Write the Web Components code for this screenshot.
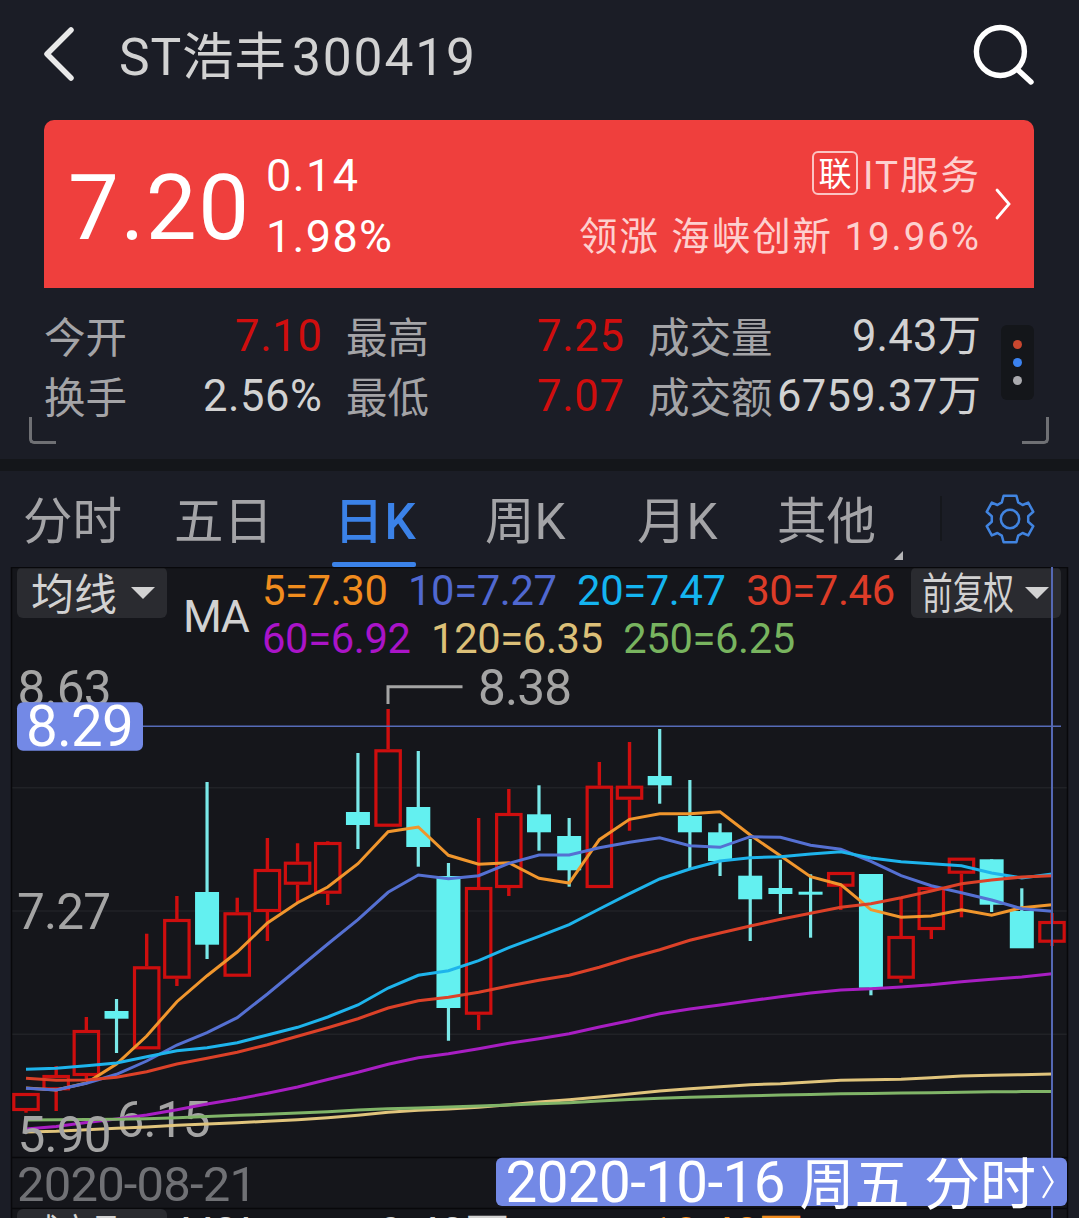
<!DOCTYPE html>
<html lang="zh-CN">
<head>
<meta charset="utf-8">
<title>ST浩丰 300419</title>
<style>
  body {
    margin: 0;
    background: #1b1d26;
    color: #d2d2d2;
    font-family: Roboto, "Noto Sans CJK SC", sans-serif;
    overflow: hidden;
  }
</style>
</head>
<body>
<stock-page></stock-page>

<script>
const define = (name, html, setup) => {
  const template = document.createElement('template');
  template.innerHTML = html;
  customElements.define(name, class extends HTMLElement {
    constructor() {
      super();
      this.attachShadow({ mode: 'open' });
      this.shadowRoot.appendChild(template.content.cloneNode(true));
    }
    connectedCallback() {
      if (setup) setup(this, this.shadowRoot);
    }
  });
};

// Text tracked out (or in) to an exact width
define('fit-label', `
<style>
  :host { display: block; flex: none; }
  span { display: inline-block; white-space: nowrap; }
</style>
<span><slot></slot></span>
`, (host, root) => {
  const count = host.textContent.length;
  if (count < 2) return;
  const span = root.querySelector('span');
  span.style.letterSpacing = '0px';
  span.style.marginRight = '0px';
  const natural = span.getBoundingClientRect().width;
  const space = (Number(host.getAttribute('width')) - natural) / (count - 1);
  span.style.letterSpacing = `${space}px`;
  span.style.marginRight = `${-space}px`;
});

define('title-bar', `
<style>
  :host {
    display: flex;
    align-items: center;
    box-sizing: border-box;
    height: 120px;
    padding: 0 42px 7px 42px;
    font-size: 51.5px;
    line-height: 60px;
  }
  .back { width: 34px; height: 58px; margin-top: -5px; }
  .search { width: 64px; height: 64px; margin: -5px 0 0 auto; }
  .name { display: flex; margin: 2px 0 0 43px; }
  svg { display: block; fill: none; stroke-linecap: round; stroke-linejoin: round; }
</style>
<svg class="back" viewBox="0 0 34 58" stroke="#e9e9e9" stroke-width="5.5"><path d="M29 5 5 29 29 53"/></svg>
<div class="name">
  <fit-label width="167"></fit-label>
  <fit-label width="183" style="margin-left:6px"></fit-label>
</div>
<svg class="search" viewBox="0 0 64 64" stroke="#fff" stroke-width="5.4"><circle cx="27.4" cy="29.5" r="24"/><path d="m45 48 13 12"/></svg>
`, (host, root) => {
  const [name, code] = root.querySelectorAll('fit-label');
  name.textContent = host.getAttribute('name');
  code.textContent = host.getAttribute('code');
  name.connectedCallback();
  code.connectedCallback();
});

define('quote-card', `
<style>
  :host {
    display: flex;
    box-sizing: border-box;
    height: 168px;
    margin: 0 45px 0 44px;
    padding: 25px 21px 0 24px;
    border-radius: 10px 10px 0 0;
    background: #ef3f3d;
    color: #fff;
  }
  .price { font-size: 90.5px; line-height: 127px; }
  .change { margin-left: 17px; font-size: 45px; line-height: 61px; }
  .sector { margin-left: auto; font-size: 38.5px; line-height: 61px; color: #fdd0cf; }
  .row { display: flex; justify-content: flex-end; align-items: center; height: 61px; line-height: 62px; }
  .tag {
    box-sizing: border-box;
    width: 46px;
    height: 44px;
    margin: -6px 5px 0 0;
    border: 2px solid #fbc4c3;
    border-radius: 6px;
    color: #fff;
    font-size: 33px;
    line-height: 44px;
    text-align: center;
  }
  .arrow { width: 20px; height: 36px; margin: 41px 0 0 14px; }
</style>
<div class="price"><fit-label width="181">7.20</fit-label></div>
<div class="change">
  <fit-label width="92">0.14</fit-label>
  <fit-label width="126">1.98%</fit-label>
</div>
<div class="sector">
  <div class="row"><div class="tag">联</div><fit-label width="116">IT服务</fit-label></div>
  <div class="row"><fit-label width="400">领涨 海峡创新 19.96%</fit-label></div>
</div>
<svg class="arrow" viewBox="0 0 20 36" fill="none" stroke="#fff" stroke-width="2.8" stroke-linecap="round"><path d="m4 4 12 14L4 32"/></svg>
`);

define('stat-item', `
<style>
  :host { display: flex; justify-content: space-between; line-height: 60px; height: 60px; }
  .label { margin-top: 2px; font-size: 41.5px; color: #a4a4a7; }
  .value { font-size: 43.5px; }
  :host([up]) .value { color: #d00e0e; }
</style>
<fit-label class="label"></fit-label>
<fit-label class="value"></fit-label>
`, (host, root) => {
  const [label, value] = root.querySelectorAll('fit-label');
  label.textContent = host.getAttribute('label');
  value.textContent = host.getAttribute('value');
  label.setAttribute('width', host.getAttribute('label').length * 41.5);
  value.setAttribute('width', host.getAttribute('fit'));
  label.connectedCallback();
  value.connectedCallback();
});

define('quote-stats', `
<style>
  :host {
    position: relative;
    display: flex;
    box-sizing: border-box;
    height: 171px;
    padding: 19px 45px 0 44px;
  }
  .grid {
    display: grid;
    grid-template-columns: 278px 278px 333px;
    grid-auto-rows: 60px;
    column-gap: 24px;
  }
  .more {
    display: flex;
    flex-direction: column;
    justify-content: center;
    align-items: center;
    gap: 9px;
    width: 33px;
    height: 75px;
    margin: 18px 0 0 20px;
    border-radius: 6px;
    background: #14161a;
  }
  .more i { width: 9px; height: 9px; border-radius: 50%; }
  .corner {
    position: absolute;
    top: 129px;
    box-sizing: border-box;
    width: 27px;
    height: 27px;
    border: solid #6f7074;
    border-width: 0 0 3px 3px;
    border-radius: 0 0 0 5px;
  }
  .left { left: 29px; }
  .right { right: 30px; transform: scaleX(-1); }
</style>
<div class="grid">
  <stat-item label="今开" value="7.10" fit="87" up></stat-item>
  <stat-item label="最高" value="7.25" fit="87" up></stat-item>
  <stat-item label="成交量" value="9.43万" fit="129"></stat-item>
  <stat-item label="换手" value="2.56%" fit="119"></stat-item>
  <stat-item label="最低" value="7.07" fit="87" up></stat-item>
  <stat-item label="成交额" value="6759.37万" fit="204"></stat-item>
</div>
<div class="more">
  <i style="background:#c9472f"></i>
  <i style="background:#3b82f0"></i>
  <i style="background:#aaaaae"></i>
</div>
<div class="corner left"></div>
<div class="corner right"></div>
`);

define('tab-item', `
<style>
  :host {
    position: relative;
    display: block;
    box-sizing: border-box;
    height: 96px;
    color: #a4a4a7;
    font-size: 49.5px;
    line-height: 102px;
    white-space: nowrap;
  }
  :host([active]) { color: #3b82e8; font-weight: 500; letter-spacing: 1px; }
  :host([active])::after {
    content: "";
    position: absolute;
    left: -2px;
    bottom: 0;
    width: 84px;
    height: 5px;
    border-radius: 2px;
    background: #3b82e8;
  }
  :host([more])::after {
    content: "";
    position: absolute;
    left: 117px;
    top: 80px;
    border-left: 9px solid transparent;
    border-bottom: 9px solid #b4b4b6;
  }
</style>
<slot></slot>
`);

define('chart-tabs', `
<style>
  :host {
    display: grid;
    grid-template-columns: 151px 160px 151px 152px 140px 163px 45px 50px;
    height: 96px;
    padding-left: 23px;
    border-top: 12px solid #14161a;
  }
  .divider { width: 2px; height: 45px; margin-top: 25px; background: #15171c; }
  svg { width: 50px; height: 50px; margin-top: 23px; }
</style>
<tab-item>分时</tab-item>
<tab-item>五日</tab-item>
<tab-item active>日K</tab-item>
<tab-item>周K</tab-item>
<tab-item>月K</tab-item>
<tab-item more>其他</tab-item>
<div class="divider"></div>
<svg viewBox="-25 -25 50 50" fill="none" stroke="#4184e0" stroke-width="2.5" stroke-linejoin="round">
  <path d="M-6.4-23.3H6.4L8.2-16.6 12.6-14 18.2-16.4 23.3-7.2 18.2-2.8V2.8L23.3 7.2 18.2 16.4 12.6 14 8.2 16.6 6.4 23.3H-6.4L-8.2 16.6-12.6 14-18.2 16.4-23.3 7.2-18.2 2.8V-2.8L-23.3-7.2-18.2-16.4-12.6-14-8.2-16.6Z"/>
  <circle r="9.2"/>
</svg>
`);

define('drop-button', `
<style>
  :host {
    display: flex;
    align-items: center;
    box-sizing: border-box;
    width: 150px;
    height: 51px;
    padding-left: 14px;
    border-radius: 6px;
    background: #2a2b30;
    font-size: 43px;
    line-height: 51px;
    white-space: nowrap;
  }
  span { width: 86px; padding-top: 5px; }
  :host([narrow]) { padding-left: 11px; }
  :host([narrow]) span { width: 92px; padding-top: 3px; transform: scaleX(.713); transform-origin: 0 50%; }
  i {
    margin-left: 14px;
    border: solid transparent;
    border-width: 12px 12px 0;
    border-top-color: #d2d2d2;
  }
  :host([narrow]) i { margin-left: 11px; }
</style>
<span><slot></slot></span><i></i>
`);

define('ma-legend', `
<style>
  :host { display: flex; height: 100px; padding-left: 17px; }
  .name { width: 79px; margin-left: 16px; font-size: 44.5px; line-height: 100px; letter-spacing: -1.5px; }
  .values { flex: none; width: 649px; font-size: 41.7px; line-height: 48px; letter-spacing: -.35px; }
  .row { display: flex; gap: 20.5px; white-space: nowrap; }
</style>
<drop-button>均线</drop-button>
<div class="name">MA</div>
<div class="values">
  <div class="row">
    <span style="color:#f08c1e">5=7.30</span>
    <span style="color:#5068d0">10=7.27</span>
    <span style="color:#14b4f0">20=7.47</span>
    <span style="color:#dc3c28">30=7.46</span>
  </div>
  <div class="row">
    <span style="color:#aa14c8">60=6.92</span>
    <span style="color:#dcc078">120=6.35</span>
    <span style="color:#78b45f">250=6.25</span>
  </div>
</div>
<drop-button narrow>前复权</drop-button>
`);

// [direction, body top, body bottom, high, low]
const candles = [
  ['up', 1093, 1111, 1093, 1112.7], ['up', 1075, 1090.3, 1066, 1111],
  ['up', 1030, 1076, 1017, 1080], ['down', 1011, 1018.7, 999, 1053],
  ['up', 966.3, 1049.3, 933.7, 1049], ['up', 919, 978.7, 896, 986],
  ['down', 892, 944.7, 782, 959], ['up', 912.3, 976.7, 897.7, 976],
  ['up', 869, 912, 838, 941], ['up', 861.7, 884.7, 843.3, 902],
  ['up', 842, 893.7, 841.3, 905], ['down', 812, 825, 753, 849],
  ['up', 749.3, 826.7, 709, 826], ['down', 807, 847, 751, 866.7],
  ['down', 876, 1008, 863, 1040.7], ['up', 887, 1014.7, 818, 1030],
  ['up', 813, 888, 789, 896], ['down', 814.3, 832.3, 785.3, 850.7],
  ['down', 836, 870.3, 818, 886.7], ['up', 785.7, 888, 762, 888],
  ['up', 785.7, 799.7, 742, 830.7], ['down', 776, 785.3, 729, 803.7],
  ['down', 816, 832.3, 780, 869], ['down', 832.3, 861, 823.3, 876],
  ['down', 875.7, 899.3, 839, 941], ['down', 888, 894, 859.7, 914],
  ['down', 891.7, 894.7, 874.3, 937.7], ['up', 872, 886.7, 872, 910],
  ['down', 874, 987.7, 874, 995.3], ['up', 936, 978.7, 897.7, 982.7],
  ['up', 887, 930, 887, 939], ['up', 857.7, 873.7, 857.7, 917.3],
  ['down', 859.3, 904.7, 859.3, 912], ['down', 911, 948.3, 888.3, 948],
  ['up', 921, 942.7, 913, 946],
];

const averages = [
  ['#f0962d', [1088, 1090, 1083, 1064, 1036, 1001.7, 975.7, 952, 923, 902.7, 887, 863.7, 831.7, 827, 855.3, 864.3, 862.7, 878.3, 883, 839.7, 819.3, 813.7, 813.7, 811.7, 835, 855.7, 876.7, 884.7, 909.7, 917.3, 916, 909.7, 915.3, 907.7, 904.7]],
  ['#5570d2', [1088.3, 1090, 1083.3, 1074.3, 1061, 1045, 1032.7, 1017.7, 994, 969, 944, 919.7, 892.3, 875, 878.7, 875.7, 863.3, 855, 855, 847.7, 842.3, 837.7, 845.7, 847.3, 836.7, 837.3, 845.3, 849.3, 861.3, 875.7, 885.7, 892.7, 900, 908.7, 911.3]],
  ['#1eb4ec', [1069.3, 1068.3, 1065.7, 1063, 1056.7, 1050.7, 1047.7, 1042.7, 1035, 1027.3, 1017, 1005, 988, 975.3, 970.7, 960.7, 947.7, 936.3, 924.7, 909, 893.7, 879, 869, 861, 857.7, 856.7, 854, 851.7, 858, 861.7, 863.7, 865.7, 873, 878, 874]],
  ['#dc4128', [1078.3, 1080.3, 1080, 1077.3, 1071.7, 1064, 1058.3, 1052.3, 1044.7, 1036.3, 1027.7, 1018.7, 1008, 1000.7, 997.3, 992.3, 986, 980.3, 975.3, 967.3, 958, 949.7, 940.3, 933, 926, 919.3, 913.3, 907.3, 903.7, 897.7, 891, 883.7, 880, 877, 875.7]],
  ['#e0c47c', [1132, 1131.3, 1129.7, 1128.3, 1127, 1125.3, 1124, 1122.7, 1121.3, 1119.7, 1117.7, 1115.3, 1112.3, 1110.3, 1109, 1107.3, 1104.7, 1102, 1099.7, 1097, 1094, 1091, 1088.7, 1086.7, 1084.7, 1083.7, 1082, 1080.3, 1079.7, 1079.3, 1077.7, 1076, 1075.3, 1074.7, 1074]],
  ['#a81ec3', [1129, 1126.5, 1122.5, 1119, 1115, 1109.7, 1104, 1099, 1093.3, 1087, 1079.5, 1072.3, 1064.3, 1057.7, 1053.7, 1048.7, 1043.3, 1038.7, 1033.7, 1027, 1020.7, 1013.7, 1009, 1005, 1000.7, 996.7, 993, 990, 988.7, 987, 984.7, 981.7, 979.3, 977, 973.7]],
  ['#80b468', [1120, 1119.7, 1119.5, 1119.3, 1118.7, 1117.7, 1116.5, 1115.3, 1114.3, 1113, 1111.7, 1110, 1108.7, 1108, 1107, 1106, 1105, 1103.8, 1102.7, 1101, 1099.5, 1098.3, 1097.3, 1096.5, 1095.7, 1095, 1094.5, 1093.8, 1093.5, 1093, 1092.7, 1092.2, 1091.8, 1091.6, 1091.5]],
];

const centre = (i) => 26 + i * 30.176;

const drawCandle = ([kind, top, bottom, high, low], i) => {
  const x = centre(i);
  if (kind === 'down') {
    return `<path d="M${x} ${high}V${low}" stroke="#7ae8e8" stroke-width="3.2"/>
      <rect x="${x - 12}" y="${top}" width="24" height="${bottom - top}" fill="#63f0f0"/>`;
  }
  return `<path d="M${x} ${high}V${top}M${x} ${bottom}V${Math.max(low, bottom)}" stroke="#ce0e0e" stroke-width="3.4"/>
    <rect x="${x - 12.2}" y="${top + 1.5}" width="24.4" height="${bottom - top - 3}" fill="none" stroke="#ce0e0e" stroke-width="3.2"/>`;
};

const drawAverage = ([colour, ys]) =>
  `<polyline points="${ys.map((y, i) => `${centre(i)},${y}`).join(' ')}" stroke="${colour}" fill="none" stroke-width="3"/>`;

define('k-chart', `
<style>
  :host {
    display: grid;
    height: 651px;
    overflow: hidden;
    background: linear-gradient(90deg, transparent 12px, #15161b 12px 1067px, transparent 1067px);
  }
  svg, ma-legend { grid-area: 1 / 1; }
  svg { display: block; width: 1079px; height: 651px; z-index: 1; }
  text { font-size: 49.5px; fill: #a4a4a4; letter-spacing: -.8px; }
</style>
<ma-legend></ma-legend>
<svg viewBox="0 567 1079 651">
  <path d="M12 787.7H1067M12 911H1067M12 1034.3H1067" stroke="#212227" stroke-width="1.5"/>
  <path d="M11.5 1218V567.5H1067.5V1218M12 1157.5H1067M12 1208.5H1067" stroke="#08080b" stroke-width="1.5" fill="none"/>
  <text x="17.5" y="706">8.63</text>
  <text x="17" y="929.3">7.27</text>
  <text x="116.5" y="1137.3">6.15</text>
  <path d="M388 704V686.8H462.5" stroke="#a4a4a4" stroke-width="3" fill="none"/>
  <text x="478" y="705.3">8.38</text>
  <g id="candles"></g>
  <g id="averages"></g>
  <text x="17.5" y="1152.3">5.90</text>
  <path d="M143 726.3H1061" stroke="#566bb8" stroke-width="1.6"/>
  <path d="M1052 567V1218" stroke="#5568b4" stroke-width="2"/>
  <rect x="17" y="702.3" width="126" height="48.4" rx="6" fill="#7389e6"/>
  <text x="26" y="746" style="font-size:56.5px;fill:#fff">8.29</text>
  <text x="17" y="1201.3" textLength="240" style="font-size:49px;fill:#707175;letter-spacing:0">2020-08-21</text>
  <rect x="496" y="1157.7" width="571" height="48.3" rx="6" fill="#7389e6"/>
  <text x="505.5" y="1202.3" textLength="280" style="font-size:56.5px;fill:#fff;letter-spacing:0">2020-10-16</text>
  <text x="799.5" y="1204" textLength="110" style="font-size:55px;fill:#fff;letter-spacing:0">周五</text>
  <text x="924" y="1204" textLength="112" style="font-size:56px;fill:#fff;letter-spacing:0">分时</text>
  <path d="m1043.5 1167 9 15-9 15" stroke="#fff" stroke-width="2.4" fill="none" stroke-linecap="round"/>
  <path d="M17 1218V1215a6 6 0 0 1 6-6H161a6 6 0 0 1 6 6V1218Z" fill="#2a2b30"/>
  <text x="31" y="1251" textLength="90" lengthAdjust="spacingAndGlyphs" style="font-size:43px;fill:#d2d2d2;letter-spacing:0">成交量</text>
  <text x="183" y="1249" style="font-size:43.5px;fill:#d2d2d2;letter-spacing:0">VOL</text>
  <text x="379" y="1249" style="font-size:43.5px;fill:#d2d2d2;letter-spacing:.4px">9.43万</text>
  <text x="649" y="1249" style="font-size:43.5px;fill:#f08c1e;letter-spacing:.2px">10.48万</text>
</svg>
`, (host, root) => {
  root.querySelector('#candles').innerHTML = candles.map(drawCandle).join('');
  root.querySelector('#averages').innerHTML = averages.map(drawAverage).join('');
});

define('stock-page', `
<style>
  :host { display: block; width: 1079px; height: 1218px; overflow: hidden; }
</style>
<title-bar name="ST浩丰" code="300419"></title-bar>
<quote-card></quote-card>
<quote-stats></quote-stats>
<chart-tabs></chart-tabs>
<k-chart></k-chart>
`);
</script>
</body>
</html>
